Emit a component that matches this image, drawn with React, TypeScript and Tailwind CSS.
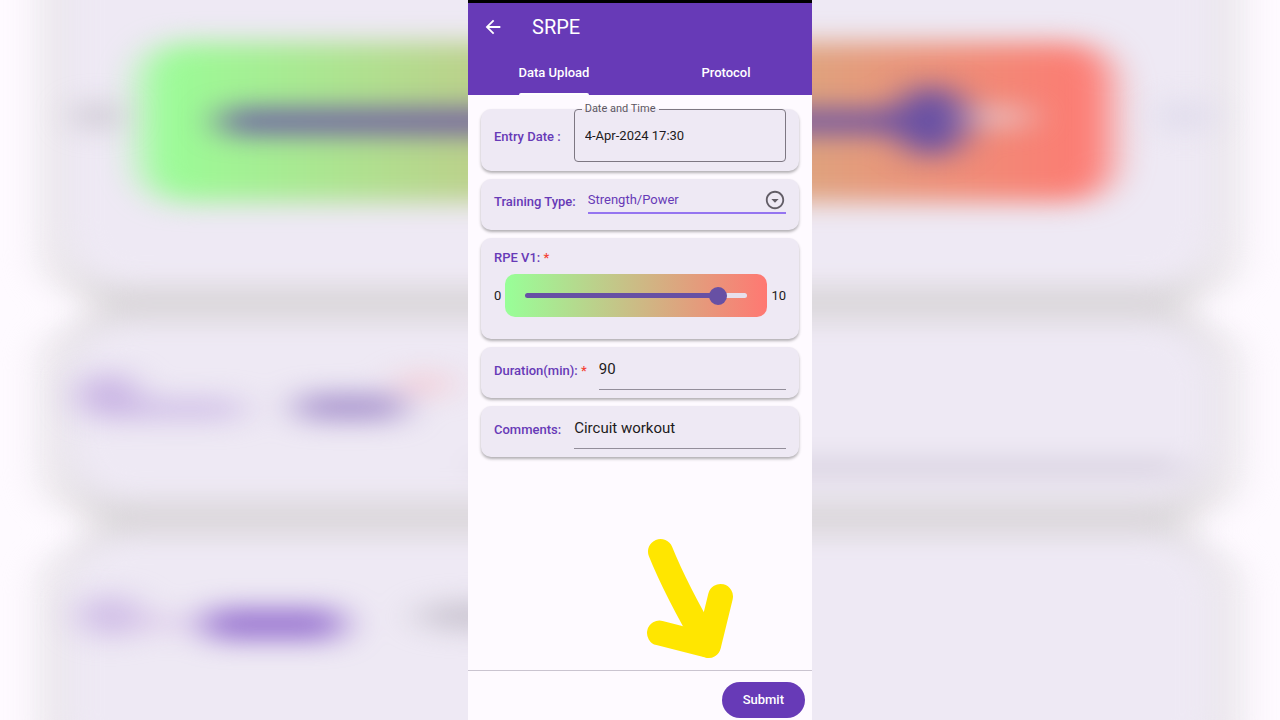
import { useState, type ReactNode } from 'react'
import { MdArrowBack, MdOutlineArrowDropDownCircle } from 'react-icons/md'

function Backdrop() {
  return (
    <svg
      className="absolute inset-0 h-full w-full"
      viewBox="0 0 1280 720"
      preserveAspectRatio="xMidYMid slice"
      aria-hidden="true"
    >
      <defs>
        <filter
          id="soft"
          x="-200"
          y="-200"
          width="1680"
          height="1120"
          filterUnits="userSpaceOnUse"
          colorInterpolationFilters="sRGB"
        >
          <feGaussianBlur stdDeviation="19 13" />
        </filter>
        <linearGradient id="effort">
          <stop offset="0" stopColor="#98ff98" />
          <stop offset="1" stopColor="#ff7872" />
        </linearGradient>
      </defs>
      <rect width="1280" height="720" fill="#fefaff" />
      <g filter="url(#soft)">
        <rect x="42" y="-80" width="1196" height="378" rx="44" fill="#e9e5e9" />
        <rect x="42" y="322" width="1196" height="194" rx="44" fill="#e9e5e9" />
        <rect x="42" y="546" width="1196" height="240" rx="44" fill="#e9e5e9" />
        <rect x="90" y="270" width="1100" height="300" fill="#dcd8dc" />
      </g>
      <g filter="url(#soft)">
        <rect x="62" y="-80" width="1156" height="276" fill="#eee9f4" />
        <rect x="62" y="-80" width="1156" height="278" rx="44" fill="#eee9f4" />
        <rect x="62" y="-80" width="1156" height="364" rx="60" fill="#eee9f4" />
        <rect x="62" y="322" width="1156" height="178" rx="60" fill="#eee9f4" />
        <rect x="62" y="536" width="1156" height="240" rx="60" fill="#eee9f4" />
        <rect x="480" y="464" width="703" height="8" fill="#bcb3c6" />
      </g>
      <g filter="url(#soft)">
        <rect x="141" y="42" width="971" height="160" rx="40" fill="url(#effort)" />
      </g>
      <g filter="url(#soft)">
        <rect x="219" y="109" width="714" height="25" rx="12" fill="#6750a4" opacity="0.9" />
        <rect x="965" y="108" width="66" height="18" rx="9" fill="#e4deec" opacity="0.7" />
        <circle cx="931" cy="121" r="36" fill="#6750a4" />
        <ellipse cx="98" cy="116" rx="22" ry="15" fill="#bdb9c2" opacity="0.7" />
        <ellipse cx="1185" cy="116" rx="28" ry="16" fill="#dcd8ea" opacity="0.8" />
      </g>
      <g filter="url(#soft)">
        <ellipse cx="108" cy="396" rx="30" ry="24" fill="#c0a8e0" opacity="0.8" />
        <rect x="120" y="398" width="124" height="22" rx="11" fill="#c4afe2" opacity="0.7" />
        <rect x="296" y="394" width="108" height="26" rx="12" fill="#9a82c6" opacity="0.85" />
        <ellipse cx="424" cy="384" rx="30" ry="12" fill="#f6bcc4" opacity="0.6" />
        <ellipse cx="110" cy="616" rx="32" ry="22" fill="#c9b4e4" opacity="0.8" />
        <rect x="130" y="616" width="60" height="14" rx="7" fill="#d4bce6" opacity="0.7" />
        <rect x="202" y="608" width="142" height="32" rx="16" fill="#8459c8" opacity="0.8" />
        <ellipse cx="470" cy="616" rx="54" ry="14" fill="#b9b4c0" opacity="0.7" />
      </g>
    </svg>
  )
}

function Card({ className, children }: { className: string; children: ReactNode }) {
  return (
    <div
      className={`rounded-[10px] bg-[#eee9f4] px-[13px] shadow-[0_2px_3px_rgba(0,0,0,0.3)] ${className}`}
    >
      {children}
    </div>
  )
}

function FieldLabel({
  htmlFor,
  required,
  children,
}: {
  htmlFor: string
  required?: boolean
  children: ReactNode
}) {
  return (
    <label
      htmlFor={htmlFor}
      className="shrink-0 pt-0.5 text-[13px] leading-4 font-medium text-[#673ab7]"
    >
      {children}
      {required && <span className="text-[#f44336]"> *</span>}
    </label>
  )
}

export default function App() {
  const [rpe, setRpe] = useState(9)

  return (
    <div className="relative flex min-h-screen justify-center overflow-hidden font-[Roboto,sans-serif]">
      <Backdrop />
      <div className="relative flex w-full max-w-[344px] flex-col bg-[#fefaff]">
        <header className="border-t-[3px] border-black bg-[#673ab7] text-white">
          <div className="flex h-12 items-center gap-7 px-[14px]">
            <button type="button" aria-label="Back">
              <MdArrowBack size={22} />
            </button>
            <h1 className="text-xl">SRPE</h1>
          </div>
          <nav className="grid h-11 grid-cols-2 text-[13px] font-medium">
            <a href="#upload" className="flex justify-center">
              <span className="relative flex items-center">
                Data Upload
                <span className="absolute inset-x-0 bottom-0 h-[2px] rounded-t bg-white" />
              </span>
            </a>
            <a href="#protocol" className="flex items-center justify-center">
              Protocol
            </a>
          </nav>
        </header>

        <form id="srpe" className="flex flex-1 flex-col gap-2 px-[13px] pt-[14px] pb-[11px]">
          <Card className="flex items-center gap-[13px] pb-[9px]">
            <FieldLabel htmlFor="date">Entry Date :</FieldLabel>
            <fieldset className="-mt-2 min-w-0 flex-1 rounded border border-[#7d7782] px-[7px] pb-2">
              <legend className="px-[3px] text-[11px] leading-4 text-[#5c5762]">
                <label htmlFor="date">Date and Time</label>
              </legend>
              <input
                id="date"
                defaultValue="4-Apr-2024 17:30"
                className="h-9 w-full px-[3px] text-[13px] text-[#1d1b20] outline-none"
              />
            </fieldset>
          </Card>

          <Card className="flex items-center gap-3 pt-2 pb-4">
            <FieldLabel htmlFor="type">Training Type:</FieldLabel>
            <div className="relative flex-1">
              <select
                id="type"
                className="block h-[27px] w-full appearance-none border-b-2 border-[#9575f0] text-[13px] text-[#673ab7] outline-none"
              >
                <option>Strength/Power</option>
              </select>
              <MdOutlineArrowDropDownCircle
                size={22}
                className="pointer-events-none absolute top-0.5 right-0 text-[#625d66]"
              />
            </div>
          </Card>

          <Card className="pt-[10px] pb-[22px]">
            <div className="flex">
              <FieldLabel htmlFor="rpe" required>
                RPE V1:
              </FieldLabel>
            </div>
            <div className="mt-2 flex items-center gap-1 text-[13px] text-[#1d1b20]">
              <span>0</span>
              <div className="flex h-[43px] flex-1 items-center rounded-[10px] bg-linear-to-r/srgb from-[#98ff98] to-[#ff7872] px-5">
                <input
                  id="rpe"
                  type="range"
                  min={0}
                  max={10}
                  value={rpe}
                  onChange={(e) => setRpe(Number(e.target.value))}
                  style={{
                    backgroundImage: `linear-gradient(to right, #6750a4 ${rpe * 10}%, #e7e0ec ${rpe * 10}%)`,
                  }}
                  className="h-[5px] w-full appearance-none rounded-full outline-none [&::-webkit-slider-thumb]:h-[18px] [&::-webkit-slider-thumb]:w-[18px] [&::-webkit-slider-thumb]:appearance-none [&::-webkit-slider-thumb]:rounded-full [&::-webkit-slider-thumb]:bg-[#6750a4]"
                />
              </div>
              <span>10</span>
            </div>
          </Card>

          <Card className="flex items-center gap-3 pt-0.5 pb-2">
            <FieldLabel htmlFor="duration" required>
              Duration(min):
            </FieldLabel>
            <input
              id="duration"
              defaultValue="90"
              className="h-[41px] w-full min-w-0 border-b border-[#938e9a] text-[15px] text-[#1d1b20] outline-none"
            />
          </Card>

          <Card className="flex items-center gap-[13px] pt-0.5 pb-2">
            <FieldLabel htmlFor="comments">Comments:</FieldLabel>
            <input
              id="comments"
              defaultValue="Circuit workout"
              className="h-[41px] w-full min-w-0 border-b border-[#938e9a] text-[15px] text-[#1d1b20] outline-none"
            />
          </Card>

          <svg
            width="88"
            height="121"
            viewBox="646 538 88 121"
            fill="none"
            stroke="#ffe600"
            strokeWidth="25"
            strokeLinecap="round"
            strokeLinejoin="round"
            className="mt-auto mr-[65px] self-end"
            aria-hidden="true"
          >
            <path d="M660.500 551.500Q676 590 708 645" />
            <path d="M720.500 596.500L708.500 645.500L659.500 633" />
          </svg>
        </form>

        <footer className="flex justify-end border-t border-[#cac4d0] px-[7px] pt-[11px] pb-0.5">
          <button
            type="submit"
            form="srpe"
            className="h-9 rounded-full bg-[#673ab7] px-[21px] text-[13px] font-medium text-white"
          >
            Submit
          </button>
        </footer>
      </div>
    </div>
  )
}
